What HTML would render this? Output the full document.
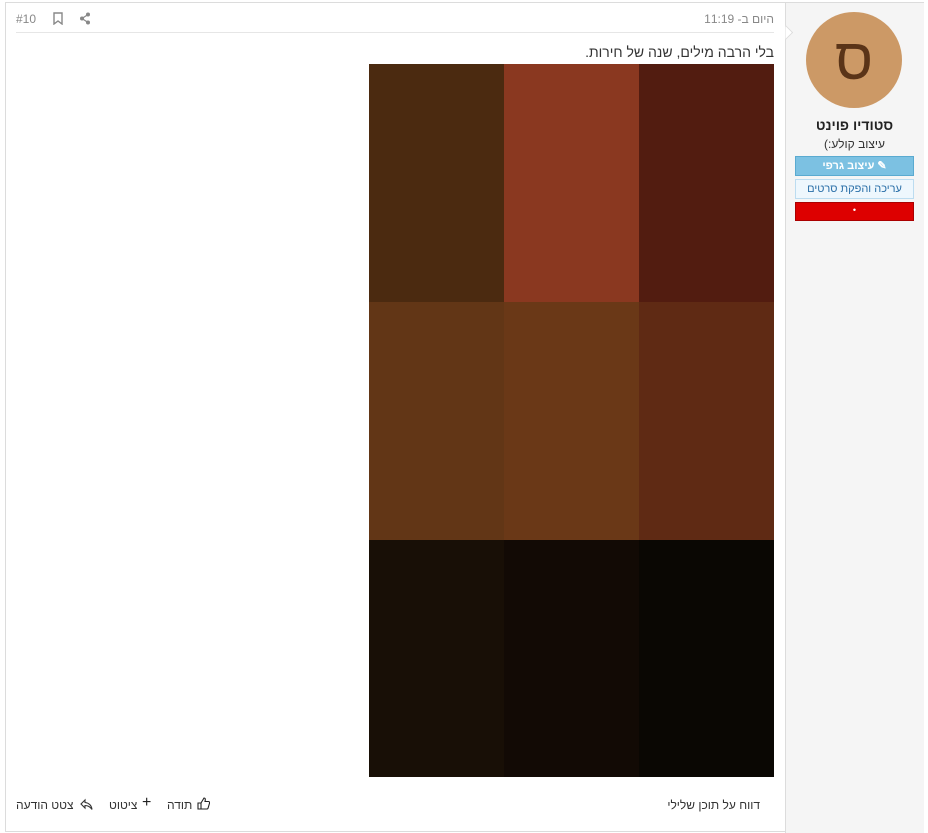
<!DOCTYPE html>
<html dir="rtl"><head><meta charset="utf-8"><style>
body{margin:0;width:928px;height:828px;background:#fff;font-family:"Liberation Sans","Noto Sans CJK SC",sans-serif;position:relative;overflow:hidden}
.a{position:absolute}
</style></head><body>
<div class="a" style="left:5px;top:2px;width:919px;height:830px;border:1px solid #dcdcdc;box-sizing:border-box"></div>
<div class="a" style="left:785px;top:3px;width:138px;height:830px;background:#f5f5f5;border-left:1px solid #dcdcdc"></div>
<div class="a" style="left:780px;top:27px;width:10px;height:10px;background:#fff;border-right:1px solid #dcdcdc;border-top:1px solid #dcdcdc;transform:rotate(45deg);clip-path:polygon(0 0,100% 0,100% 100%)"></div>
<div class="a" style="left:806px;top:12px;width:96px;height:96px;border-radius:50%;background:#cc9966;color:#5a3418;font-size:58px;text-align:center;line-height:96px">ס</div>
<div class="a" style="left:786px;top:117px;width:137px;text-align:center;font-weight:bold;font-size:14px;color:#222">סטודיו פוינט</div>
<div class="a" style="left:786px;top:137px;width:137px;text-align:center;font-size:12px;color:#333">עיצוב קולע:)</div>
<div class="a" style="left:795px;top:156px;width:117px;height:18px;background:#7cc1e2;border:1px solid #5aaad0;color:#fff;font-size:11px;font-weight:bold;text-align:center;line-height:18px">✎ עיצוב גרפי</div>
<div class="a" style="left:795px;top:179px;width:117px;height:18px;background:#eef7fd;border:1px solid #bcdcf0;color:#2a6fa8;font-size:11px;text-align:center;line-height:18px">עריכה והפקת סרטים</div>
<div class="a" style="left:795px;top:202px;width:117px;height:17px;background:#dd0000;border:1px solid #a00;color:#fff;font-size:9px;text-align:center;line-height:15px">•</div>
<div class="a" style="right:154px;top:12px;font-size:12px;color:#888">היום ב- 11:19</div>
<div class="a" style="left:16px;top:12px;font-size:12px;color:#888;direction:ltr">#10</div>
<svg class="a" style="left:52px;top:12px" width="12" height="13" viewBox="0 0 12 13"><path d="M2 1h8v11l-4-3-4 3z" fill="none" stroke="#888" stroke-width="1.4"/></svg>
<svg class="a" style="left:79px;top:12px" width="12" height="13" viewBox="0 0 12 13"><circle cx="9" cy="2.5" r="2" fill="#888"/><circle cx="9" cy="10.5" r="2" fill="#888"/><circle cx="3" cy="6.5" r="2" fill="#888"/><path d="M9 2.5L3 6.5L9 10.5" stroke="#888" stroke-width="1.2" fill="none"/></svg>
<div class="a" style="left:16px;top:32px;width:758px;height:1px;background:#e6e6e6"></div>
<div class="a" style="right:154px;top:44px;font-size:14px;color:#333">בלי הרבה מילים, שנה של חירות.</div>
<div class="a" style="left:369px;top:64px;width:405px;height:713px;display:grid;grid-template-columns:135px 135px 135px;grid-template-rows:238px 238px 237px;direction:ltr">
<div style="background:#4b2a10"></div><div style="background:#8a3820"></div><div style="background:#521c10"></div>
<div style="background:#623616"></div><div style="background:#6a3817"></div><div style="background:#5f2a14"></div>
<div style="background:#180f06"></div><div style="background:#120a05"></div><div style="background:#0a0703"></div>
</div>
<div class="a" style="right:168px;top:798px;font-size:12px;color:#333">דווח על תוכן שלילי</div>
<div class="a" style="left:16px;top:798px;font-size:12px;color:#333">צטט הודעה</div>
<svg class="a" style="left:80px;top:798px" width="13" height="13" viewBox="0 0 13 13"><path d="M5 2L1 6l4 4V7.5c3 0 5 1 7 4-0.5-4-3-6.5-7-7z" fill="none" stroke="#333" stroke-width="1.1"/></svg>
<div class="a" style="left:109px;top:798px;font-size:12px;color:#333">ציטוט</div>
<div class="a" style="left:142px;top:794px;font-size:16px;color:#222">+</div>
<div class="a" style="left:167px;top:798px;font-size:12px;color:#333">תודה</div>
<svg class="a" style="left:197px;top:797px" width="13" height="13" viewBox="0 0 13 13"><path d="M1 6h3v6H1zM4 6l3-5c1.5 0 1.5 1.5 1 3.5h3.5c1 0 1.3 1 1 1.8l-1.5 5c-.3.5-.7.7-1.2.7H4" fill="none" stroke="#222" stroke-width="1.1"/></svg>
</body></html>
